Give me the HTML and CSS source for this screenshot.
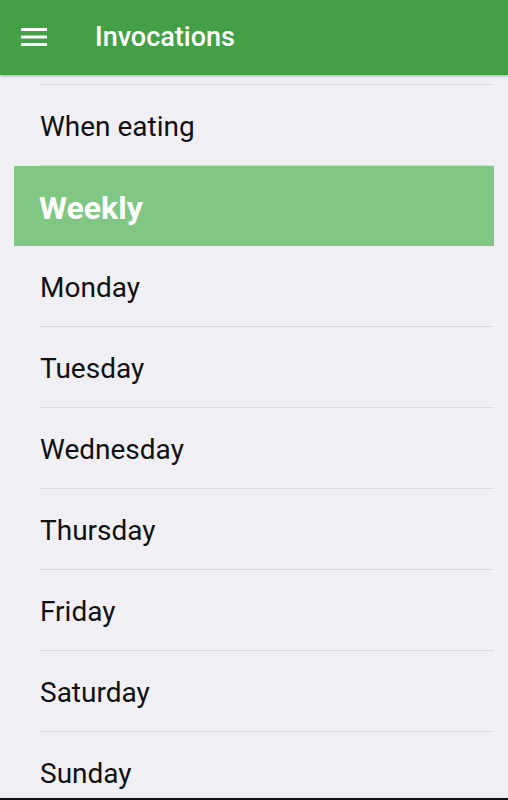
FILE: index.html
```html
<!DOCTYPE html>
<html lang="en">
<head>
    <meta charset="UTF-8">
    <meta name="viewport" content="width=device-width, initial-scale=1.0">
    <title>Invocations</title>
    <link rel="stylesheet" href="styles.css">
</head>
<body>
    <!-- Barra superior -->
    <header class="toolbar">
        <button class="menu-btn" aria-label="Menu">
            <svg width="26" height="18" viewBox="0 0 26 18">
                <rect x="0" y="0" width="26" height="3" fill="#ffffff"/>
                <rect x="0" y="7.5" width="26" height="3" fill="#ffffff"/>
                <rect x="0" y="15" width="26" height="3" fill="#ffffff"/>
            </svg>
        </button>
        <h1>Invocations</h1>
    </header>

    <!-- Lista de invocações -->
    <main class="list">
        <div class="item first">When eating</div>
        <div class="section">Weekly</div>
        <div class="item">Monday</div>
        <div class="item">Tuesday</div>
        <div class="item">Wednesday</div>
        <div class="item">Thursday</div>
        <div class="item">Friday</div>
        <div class="item">Saturday</div>
        <div class="item">Sunday</div>
    </main>

    <div class="nav-edge"></div>
</body>
</html>
```

FILE: styles.css
```css
/* Estilo geral */
body {
    margin: 0;
    height: 800px;
    display: flex;
    flex-direction: column;
    overflow: hidden;
    background-color: #efeff4;
    font-family: Roboto, "Noto Sans", sans-serif;
    color: #111111;
}

/* Barra superior */
.toolbar {
    height: 75px;
    flex-shrink: 0;
    display: flex;
    align-items: center;
    background-color: #43a047;
    box-shadow: 0 1px 3px rgba(0, 0, 0, 0.3);
    position: relative;
    z-index: 1;
}

.menu-btn {
    background: none;
    border: none;
    padding: 0;
    margin-left: 21px;
    width: 26px;
    height: 18px;
    display: flex;
    margin-top: -1px;
}

.toolbar h1 {
    margin: 0 0 0 48px;
    font-size: 27px;
    font-weight: 500;
    color: #ffffff;
    line-height: 77px;
}

/* Lista */
.list {
    flex: 1;
    overflow: hidden;
    padding-top: 9px;
}

.item {
    margin: 0 14px 0 40px;
    height: 80px;
    line-height: 84px;
    font-size: 28px;
    border-bottom: 1px solid #dadade;
}

.item.first {
    border-top: 1px solid #dadade;
}

/* Cabeçalho de seção */
.section {
    margin: 0 14px;
    height: 80px;
    line-height: 84px;
    padding-left: 25px;
    background-color: #81c784;
    color: #ffffff;
    font-size: 32px;
    font-weight: 700;
}

/* Borda inferior */
.nav-edge {
    height: 2px;
    flex-shrink: 0;
    background-color: #111111;
}
```
